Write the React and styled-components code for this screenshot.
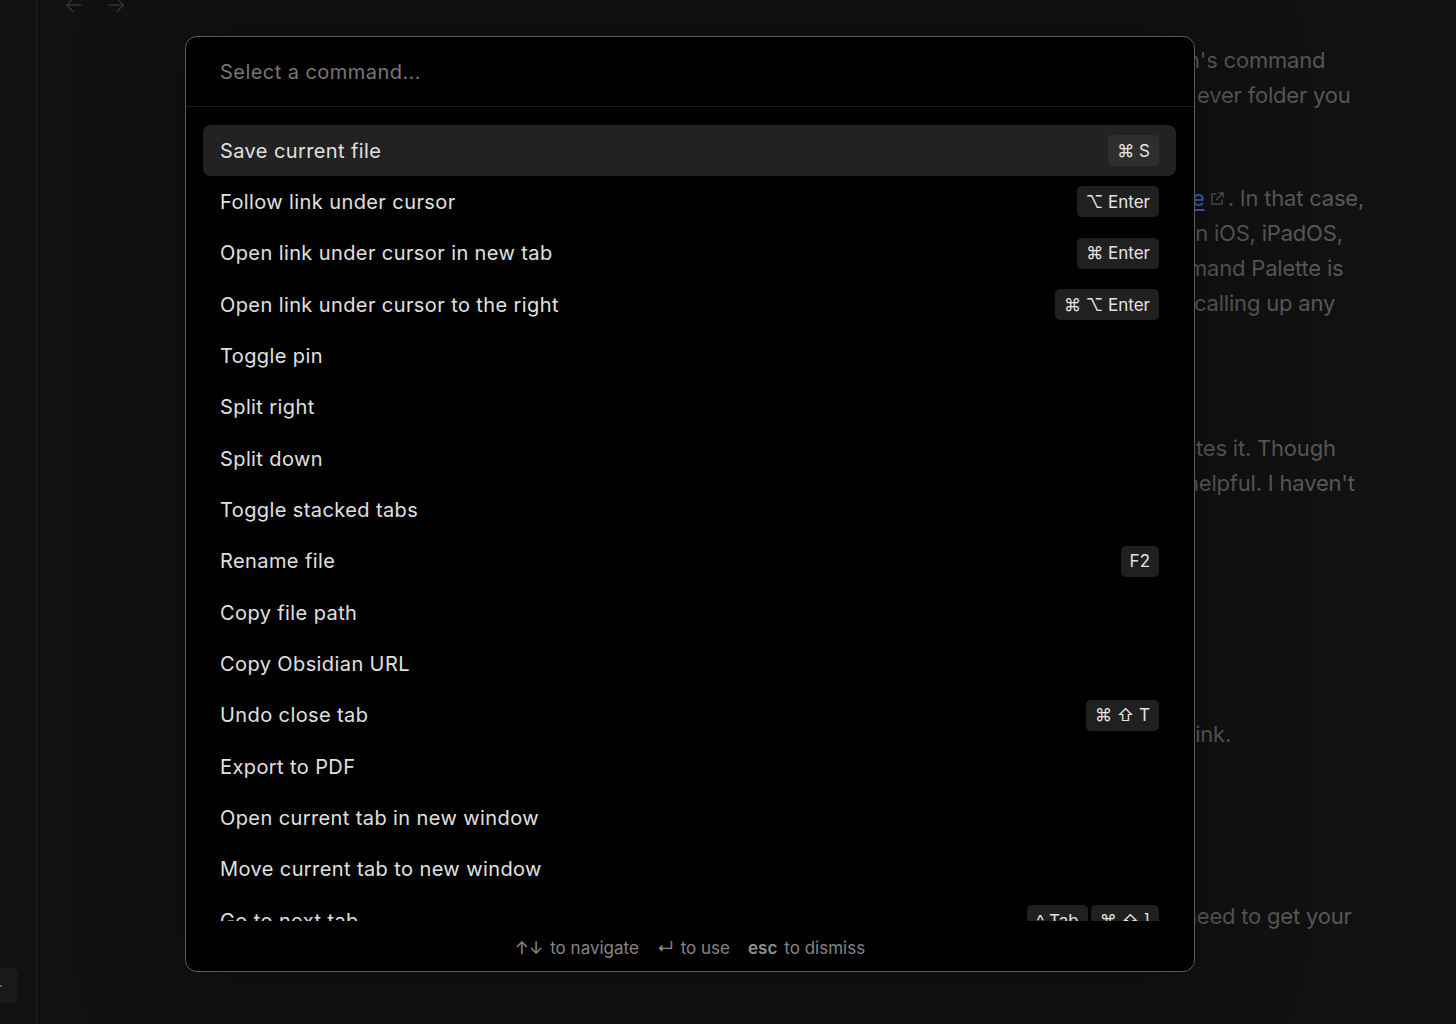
import React from "react";
import styled, { createGlobalStyle } from "styled-components";

const GlobalStyle = createGlobalStyle`
  html, body { margin: 0; padding: 0; background: #111111; }
  body { font-family: Inter, "Noto Sans", "DejaVu Sans", sans-serif; -webkit-font-smoothing: antialiased; }
  * { box-sizing: border-box; }
`;

const Shell = styled.div`
  position: relative;
  display: flex;
  width: 100%;
  height: 100vh;
  overflow: hidden;
  background: #111111;
`;

const Sidebar = styled.aside`
  width: 37px;
  flex: none;
  border-right: 1px solid #1f1f1f;
  display: flex;
  flex-direction: column;
  justify-content: flex-end;
  padding-bottom: 21px;
`;

const SideButton = styled.div`
  width: 30px;
  height: 35px;
  margin-left: -12px;
  border-radius: 6px;
  background: #191919;
  display: flex;
  align-items: center;
  justify-content: flex-end;
  padding-right: 16px;
  &::after {
    content: "";
    width: 2px;
    height: 2px;
    border-radius: 1px;
    background: #777;
  }
`;

const Main = styled.main`
  flex: 1;
  display: flex;
  flex-direction: column;
  min-width: 0;
`;

const NavBar = styled.div`
  height: 18px;
  margin-top: -4px;
  display: flex;
  align-items: center;
  gap: 24px;
  padding-left: 28px;
  color: #343434;
`;

const Content = styled.div`
  padding-top: 28.5px;
  padding-left: 1147px;
  font-size: 22px;
  line-height: 35px;
  letter-spacing: -0.2px;
  color: #575757;
`;

const Line = styled.div`
  white-space: nowrap;
  margin-top: ${(p) => p.$gap || 0}px;
  padding-left: ${(p) => p.$indent || 0}px;
  display: flex;
  align-items: center;
`;

const Link = styled.span`
  color: #3a5bb8;
  text-decoration: underline;
  text-underline-offset: 3px;
`;

const ExtIcon = styled.svg`
  margin: 0 3px 0 5px;
`;

const Modal = styled.div`
  position: absolute;
  left: 185px;
  top: 36px;
  width: 1010px;
  height: 936px;
  border: 1px solid #5a5a5a;
  border-radius: 12px;
  background: #000;
  display: flex;
  flex-direction: column;
  overflow: hidden;
  box-shadow: 0 0 90px 30px rgba(0, 0, 0, 0.18);
`;

const SearchInput = styled.input`
  flex: none;
  height: 70px;
  border: none;
  border-bottom: 1px solid #1c1c1c;
  background: transparent;
  padding: 0 0 0 34px;
  font-family: Inter, "Noto Sans", sans-serif;
  font-size: 20px;
  letter-spacing: 0.45px;
  color: #dadada;
  outline: none;
  &::placeholder { color: #767676; }
`;

const List = styled.div`
  flex: 1;
  min-height: 0;
  overflow: hidden;
  padding: 18px 18px 0 17px;
`;

const Row = styled.div`
  height: 51.33px;
  display: flex;
  align-items: center;
  justify-content: space-between;
  padding: 0 17px;
  border-radius: 8px;
  background: ${(p) => (p.$selected ? "#222222" : "transparent")};
  font-size: 20px;
  letter-spacing: 0.4px;
  color: #e0e0e0;
  white-space: nowrap;
`;

const Keys = styled.div`
  display: flex;
  gap: 3px;
`;

const Key = styled.span`
  height: 31px;
  padding: 0 9px;
  border-radius: 5px;
  display: inline-flex;
  align-items: center;
  background: ${(p) => (p.$selected ? "#2e2e2e" : "#202020")};
  font-family: Inter, "DejaVu Sans", sans-serif;
  font-size: 17px;
  letter-spacing: 0;
  color: #e4e4e4;
  white-space: pre;
`;

const Footer = styled.div`
  flex: none;
  height: 50px;
  padding-top: 3px;
  display: flex;
  align-items: center;
  justify-content: center;
  gap: 18px;
  font-size: 17px;
  color: #858585;
`;

const Hint = styled.span`
  display: inline-flex;
  align-items: center;
  gap: 7px;
`;

const HintKey = styled.span`
  color: ${(p) => (p.$bold ? "#8f8f8f" : "#8a8a8a")};
  font-weight: ${(p) => (p.$bold ? 600 : 400)};
  font-family: Inter, "DejaVu Sans", sans-serif;
`;

const ArrowLeft = () => (
  <svg width="18" height="18" viewBox="0 0 18 18" fill="none" stroke="currentColor" strokeWidth="1.3" strokeLinecap="round" strokeLinejoin="round">
    <path d="M16 9H2M8 2.5L1.5 9L8 15.5" />
  </svg>
);
const ArrowRight = () => (
  <svg width="18" height="18" viewBox="0 0 18 18" fill="none" stroke="currentColor" strokeWidth="1.3" strokeLinecap="round" strokeLinejoin="round">
    <path d="M2 9H16M10 2.5L16.5 9L10 15.5" />
  </svg>
);

const commands = [
  { label: "Save current file", keys: ["⌘ S"] },
  { label: "Follow link under cursor", keys: ["⌥ Enter"] },
  { label: "Open link under cursor in new tab", keys: ["⌘ Enter"] },
  { label: "Open link under cursor to the right", keys: ["⌘ ⌥ Enter"] },
  { label: "Toggle pin" },
  { label: "Split right" },
  { label: "Split down" },
  { label: "Toggle stacked tabs" },
  { label: "Rename file", keys: ["F2"] },
  { label: "Copy file path" },
  { label: "Copy Obsidian URL" },
  { label: "Undo close tab", keys: ["⌘ ⇧ T"] },
  { label: "Export to PDF" },
  { label: "Open current tab in new window" },
  { label: "Move current tab to new window" },
  { label: "Go to next tab", keys: ["^ Tab", "⌘ ⇧ ]"] },
  { label: "Go to previous tab", keys: ["^ ⇧ Tab", "⌘ ⇧ ["] },
];

export default function App() {
  return (
    <>
      <GlobalStyle />
      <Shell>
        <Sidebar>
          <SideButton />
        </Sidebar>
        <Main>
          <NavBar>
            <ArrowLeft />
            <ArrowRight />
          </NavBar>
          <Content>
            <Line $indent={3}>n's command</Line>
            <Line $indent={13}>ever folder you</Line>
            <Line $gap={68} $indent={8}>
              <Link>e</Link>
              <ExtIcon width="15" height="15" viewBox="0 0 16 16" fill="none" stroke="#555" strokeWidth="1.4" strokeLinecap="round" strokeLinejoin="round">
                <path d="M13 9.5V14H2V3h4.5M9.5 2H14v4.5M14 2L7 9" />
              </ExtIcon>
              . In that case,
            </Line>
            <Line $indent={6}>in iOS, iPadOS,</Line>
            <Line $indent={4}>mand Palette is</Line>
            <Line $indent={10}>calling up any</Line>
            <Line $gap={110} $indent={12}>tes it. Though</Line>
            <Line $indent={2}>helpful. I haven't</Line>
            <Line $gap={216} $indent={6}>link.</Line>
            <Line $gap={147} $indent={0}>need to get your</Line>
          </Content>
        </Main>
        <Modal>
          <SearchInput placeholder="Select a command..." readOnly />
          <List>
            {commands.map((c, i) => (
              <Row key={c.label} $selected={i === 0}>
                <span>{c.label}</span>
                {c.keys && (
                  <Keys>
                    {c.keys.map((k) => (
                      <Key key={k} $selected={i === 0}>{k}</Key>
                    ))}
                  </Keys>
                )}
              </Row>
            ))}
          </List>
          <Footer>
            <Hint>
              <HintKey>↑↓</HintKey> to navigate
            </Hint>
            <Hint>
              <HintKey>↵</HintKey> to use
            </Hint>
            <Hint>
              <HintKey $bold>esc</HintKey> to dismiss
            </Hint>
          </Footer>
        </Modal>
      </Shell>
    </>
  );
}
